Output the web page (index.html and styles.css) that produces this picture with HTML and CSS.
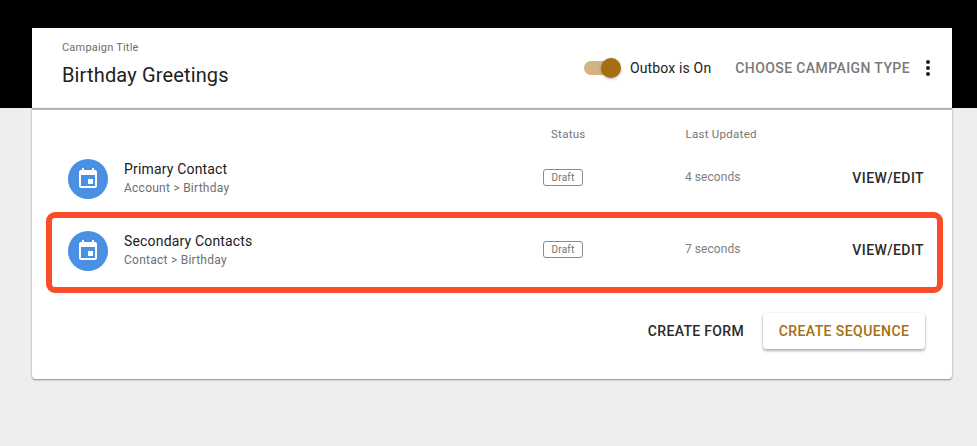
FILE: index.html
```html
<!DOCTYPE html>
<html lang="en">
<head>
<meta charset="utf-8">
<title>Birthday Greetings</title>
<link rel="stylesheet" href="styles.css">
</head>
<body>
<div class="hero">
  <header class="title-bar">
    <div class="title-block">
      <div class="title-label">Campaign Title</div>
      <div class="title-text">Birthday Greetings</div>
    </div>
    <div class="title-actions">
      <span class="switch"><span class="switch-track"></span><span class="switch-thumb"></span></span>
      <span class="switch-label">Outbox is On</span>
      <span class="choose">CHOOSE CAMPAIGN TYPE</span>
      <svg class="kebab" viewBox="0 0 24 24" width="24" height="24"><path d="M12 8c1.1 0 2-.9 2-2s-.9-2-2-2-2 .9-2 2 .9 2 2 2zm0 2c-1.1 0-2 .9-2 2s.9 2 2 2 2-.9 2-2-.9-2-2-2zm0 6c-1.1 0-2 .9-2 2s.9 2 2 2 2-.9 2-2-.9-2-2-2z"/></svg>
    </div>
  </header>
</div>
<main class="card">
  <div class="table-head">
    <span class="head-status">Status</span>
    <span class="head-updated">Last Updated</span>
  </div>
  <div class="row">
    <div class="row-main">
      <span class="avatar"><svg viewBox="0 0 24 24" width="24" height="24"><path d="M17 12h-5v5h5v-5zM16 1v2H8V1H6v2H5c-1.11 0-1.99.9-1.99 2L3 19c0 1.1.89 2 2 2h14c1.1 0 2-.9 2-2V5c0-1.1-.9-2-2-2h-1V1h-2zm3 18H5V8h14v11z"/></svg></span>
      <div>
        <div class="row-title">Primary Contact</div>
        <div class="row-sub">Account &gt; Birthday</div>
      </div>
    </div>
    <div><span class="chip">Draft</span></div>
    <div class="time">4 seconds</div>
    <div class="link">VIEW/EDIT</div>
  </div>
  <div class="row">
    <div class="row-main">
      <span class="avatar"><svg viewBox="0 0 24 24" width="24" height="24"><path d="M17 12h-5v5h5v-5zM16 1v2H8V1H6v2H5c-1.11 0-1.99.9-1.99 2L3 19c0 1.1.89 2 2 2h14c1.1 0 2-.9 2-2V5c0-1.1-.9-2-2-2h-1V1h-2zm3 18H5V8h14v11z"/></svg></span>
      <div>
        <div class="row-title">Secondary Contacts</div>
        <div class="row-sub">Contact &gt; Birthday</div>
      </div>
    </div>
    <div><span class="chip">Draft</span></div>
    <div class="time">7 seconds</div>
    <div class="link">VIEW/EDIT</div>
  </div>
  <div class="card-actions">
    <span class="link link-tight">CREATE FORM</span>
    <span class="primary">CREATE SEQUENCE</span>
  </div>
  <div class="highlight"></div>
</main>
</body>
</html>
```
FILE: styles.css
```css
* { box-sizing: border-box; }
html, body { margin: 0; height: 100%; overflow: hidden; }
body { background: #eeeeee; font-family: Roboto, "Liberation Sans", sans-serif; color: #212121; }

.hero { background: #000; height: 108px; padding: 28px 25px 0 32px; }
.title-bar { background: #fff; height: 80px; display: flex; justify-content: space-between; padding: 0 12px 0 30px; }
.title-label { font-size: 11px; line-height: 14px; color: #6e6e6e; letter-spacing: .2px; padding-top: 13px; }
.title-text { font-size: 20px; line-height: 24px; letter-spacing: .15px; margin-top: 8px; color: #212121; }
.title-actions { display: flex; align-items: center; padding-bottom: 1px; }
.switch { position: relative; width: 37px; height: 20px; display: block; margin-right: 9px; }
.switch-track { position: absolute; left: 0; top: 3px; width: 34px; height: 14px; border-radius: 7px; background: #d2b482; }
.switch-thumb { position: absolute; left: 17px; top: 0; width: 20px; height: 20px; border-radius: 50%; background: #a56e10; box-shadow: 0 1px 3px rgba(0,0,0,.3); }
.switch-label { font-size: 14px; letter-spacing: .15px; color: #212121; margin-right: 24px; }
.choose { font-size: 14px; font-weight: 500; letter-spacing: .4px; color: #7a7a7a; margin-right: 6px; }
.kebab { fill: #212121; display: block; }

.card { position: relative; background: #fff; margin: 0 25px 0 32px; height: 271px; border-top: 2px solid #b5b5b5; border-radius: 0 0 4px 4px; box-shadow: 0 1px 2px rgba(0,0,0,.4), 0 0 2px rgba(0,0,0,.12); }
.table-head { height: 32px; font-size: 11.5px; color: #757575; letter-spacing: .27px; line-height: 14px; display: flex; padding: 17px 0 0 519px; }
.head-updated { margin-left: 100px; }
.row { height: 72px; display: grid; grid-template-columns: 511px 142px 1fr auto; align-items: center; padding-right: 28px; }
.row-main { display: flex; align-items: center; padding-left: 36px; gap: 16px; padding-top: 1px; }
.avatar { width: 40px; height: 40px; border-radius: 50%; background: #4a90e2; display: flex; align-items: center; justify-content: center; }
.avatar svg { fill: #fff; display: block; }
.row-title { font-size: 14px; line-height: 18px; letter-spacing: .17px; color: #212121; }
.row-sub { font-size: 12px; line-height: 18px; letter-spacing: .25px; color: #707070; margin-top: 1px; }
.chip { display: block; width: 40px; height: 17px; margin-top: -1px; border: 1px solid #8a8a8a; border-radius: 3px; font-size: 10px; line-height: 15px; text-align: center; color: #757575; letter-spacing: .2px; }
.time { font-size: 12px; color: #808080; letter-spacing: .05px; margin-top: -3px; }
.link { font-size: 14px; font-weight: 500; letter-spacing: .4px; color: #2a2a2a; }
.link-tight { letter-spacing: .32px; }

.card-actions { display: flex; justify-content: flex-end; align-items: center; gap: 19px; padding: 27px 27px 0 0; }
.primary { height: 36px; width: 162px; display: flex; align-items: center; justify-content: center; font-size: 14px; font-weight: 500; letter-spacing: .42px; color: #a56e10; background: #fff; border-radius: 4px; box-shadow: 0 2px 3px rgba(0,0,0,.3), 0 0 2px rgba(0,0,0,.12); }

.highlight { position: absolute; left: 14px; top: 102px; width: 897px; height: 81px; border: 6px solid #f94d29; border-radius: 9px; }
```
